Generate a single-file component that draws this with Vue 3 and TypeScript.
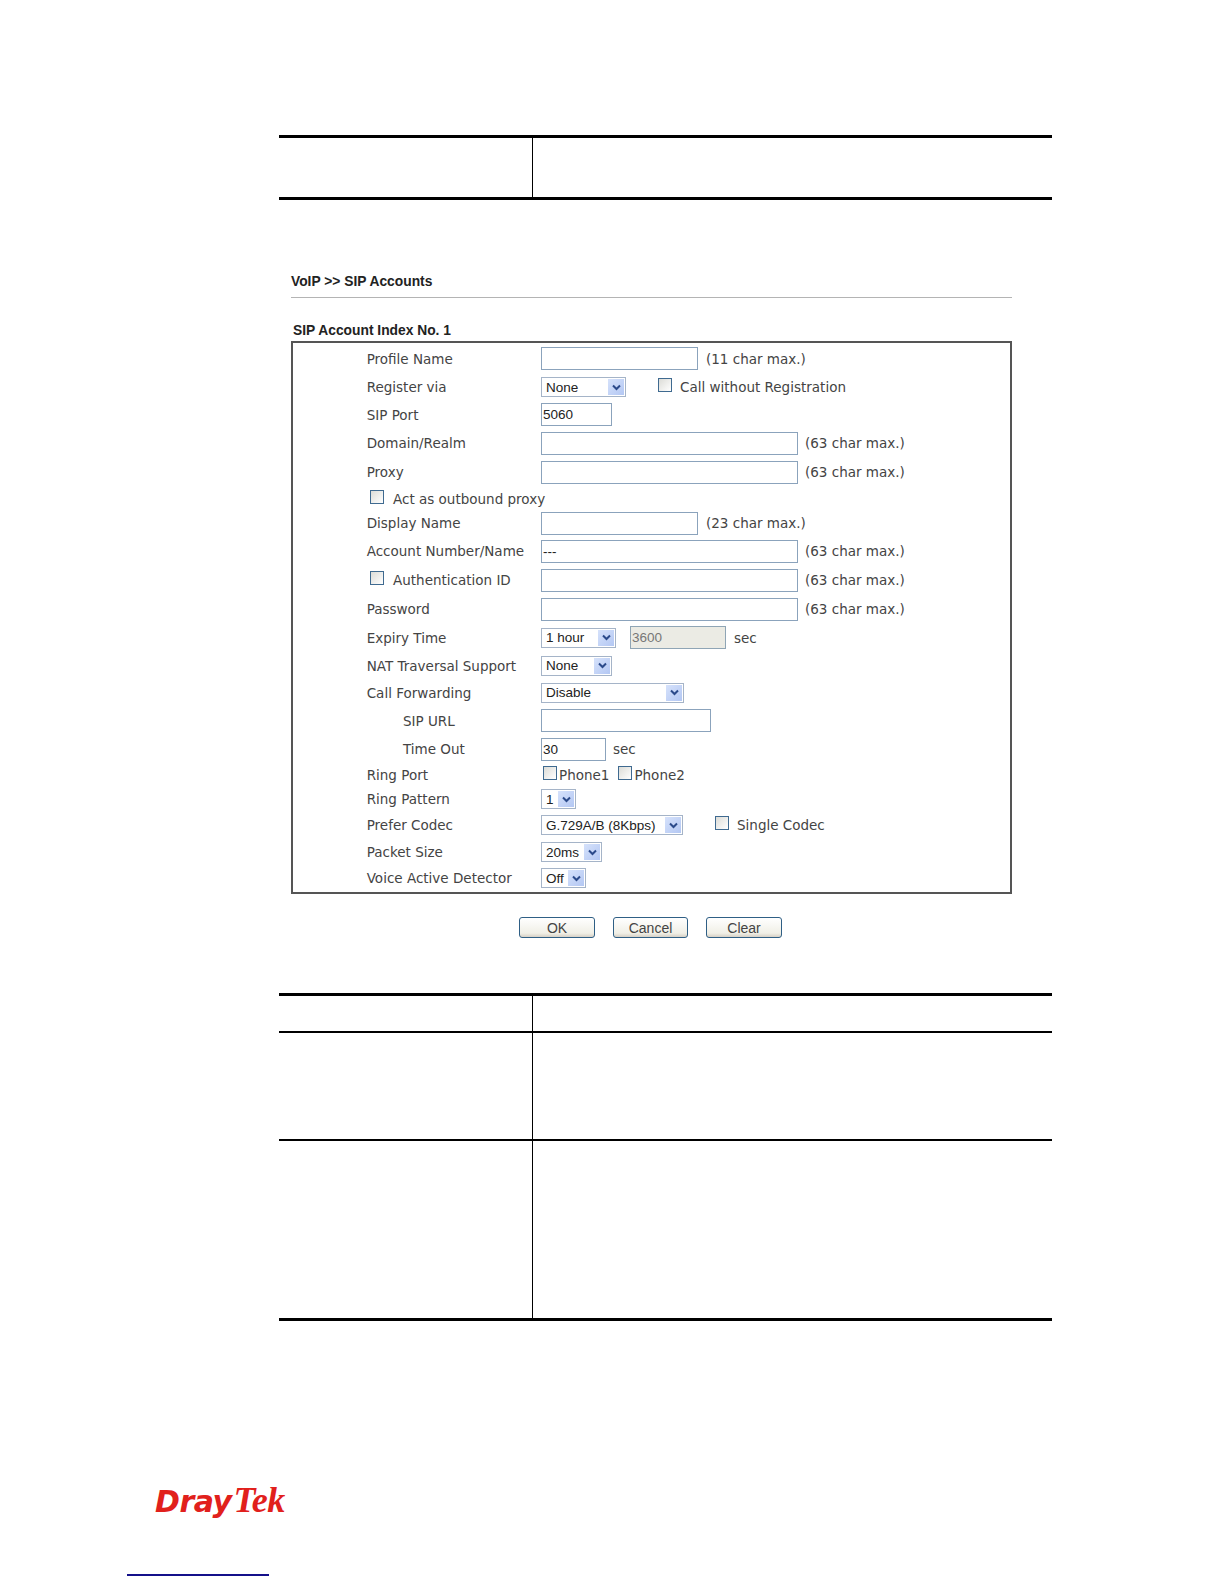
<script setup lang="ts">
const charHint = (n: number) => `(${n} char max.)`
</script>

<template>
  <div class="page">
    <div class="spec top-spec">
      <div class="spec-row r-top"><div class="c1"></div><div class="c2"></div></div>
    </div>

    <div class="shot">
      <div class="crumb">VoIP &gt;&gt; SIP Accounts</div>
      <div class="legend">SIP Account Index No. 1</div>
      <div class="box">
        <div class="form">
          <div class="lab">Profile Name</div>
          <div class="ctl"><input class="inp w157" /><span class="hint">{{ charHint(11) }}</span></div>

          <div class="lab">Register via</div>
          <div class="ctl">
            <div class="sel w85"><span class="sv">None</span><span class="arrow"><svg viewBox="0 0 9 7" width="9" height="7"><path d="M1 1.5 4.5 5 8 1.5" /></svg></span></div>
            <input type="checkbox" class="chk ml32" /><span class="t ml8">Call without Registration</span>
          </div>

          <div class="lab">SIP Port</div>
          <div class="ctl"><input class="inp w71" value="5060" /></div>

          <div class="lab">Domain/Realm</div>
          <div class="ctl"><input class="inp w257" /><span class="hint">{{ charHint(63) }}</span></div>

          <div class="lab">Proxy</div>
          <div class="ctl"><input class="inp w257" /><span class="hint">{{ charHint(63) }}</span></div>

          <div class="lab full"><input type="checkbox" class="chk" /><span class="t ml9">Act as outbound proxy</span></div>

          <div class="lab">Display Name</div>
          <div class="ctl"><input class="inp w157" /><span class="hint">{{ charHint(23) }}</span></div>

          <div class="lab">Account Number/Name</div>
          <div class="ctl"><input class="inp w257" value="---" /><span class="hint">{{ charHint(63) }}</span></div>

          <div class="lab chk-lab"><input type="checkbox" class="chk" /><span class="t ml9">Authentication ID</span></div>
          <div class="ctl"><input class="inp w257" /><span class="hint">{{ charHint(63) }}</span></div>

          <div class="lab">Password</div>
          <div class="ctl"><input class="inp w257" /><span class="hint">{{ charHint(63) }}</span></div>

          <div class="lab">Expiry Time</div>
          <div class="ctl">
            <div class="sel w75"><span class="sv">1 hour</span><span class="arrow"><svg viewBox="0 0 9 7" width="9" height="7"><path d="M1 1.5 4.5 5 8 1.5" /></svg></span></div>
            <input class="inp w96 dis ml14" value="3600" disabled /><span class="t ml8">sec</span>
          </div>

          <div class="lab">NAT Traversal Support</div>
          <div class="ctl"><div class="sel w71"><span class="sv">None</span><span class="arrow"><svg viewBox="0 0 9 7" width="9" height="7"><path d="M1 1.5 4.5 5 8 1.5" /></svg></span></div></div>

          <div class="lab">Call Forwarding</div>
          <div class="ctl"><div class="sel w143"><span class="sv">Disable</span><span class="arrow"><svg viewBox="0 0 9 7" width="9" height="7"><path d="M1 1.5 4.5 5 8 1.5" /></svg></span></div></div>

          <div class="lab ind">SIP URL</div>
          <div class="ctl"><input class="inp w170" /></div>

          <div class="lab ind">Time Out</div>
          <div class="ctl"><input class="inp w65" value="30" /><span class="t ml7">sec</span></div>

          <div class="lab">Ring Port</div>
          <div class="ctl">
            <input type="checkbox" class="chk ml2" /><span class="t ml2">Phone1</span>
            <input type="checkbox" class="chk ml9" /><span class="t ml2">Phone2</span>
          </div>

          <div class="lab">Ring Pattern</div>
          <div class="ctl"><div class="sel w35"><span class="sv">1</span><span class="arrow"><svg viewBox="0 0 9 7" width="9" height="7"><path d="M1 1.5 4.5 5 8 1.5" /></svg></span></div></div>

          <div class="lab">Prefer Codec</div>
          <div class="ctl">
            <div class="sel w142"><span class="sv">G.729A/B (8Kbps)</span><span class="arrow"><svg viewBox="0 0 9 7" width="9" height="7"><path d="M1 1.5 4.5 5 8 1.5" /></svg></span></div>
            <input type="checkbox" class="chk ml32" /><span class="t ml8">Single Codec</span>
          </div>

          <div class="lab">Packet Size</div>
          <div class="ctl"><div class="sel w61"><span class="sv">20ms</span><span class="arrow"><svg viewBox="0 0 9 7" width="9" height="7"><path d="M1 1.5 4.5 5 8 1.5" /></svg></span></div></div>

          <div class="lab">Voice Active Detector</div>
          <div class="ctl"><div class="sel w45"><span class="sv">Off</span><span class="arrow"><svg viewBox="0 0 9 7" width="9" height="7"><path d="M1 1.5 4.5 5 8 1.5" /></svg></span></div></div>
        </div>
      </div>
      <div class="btns">
        <button class="btn">OK</button>
        <button class="btn">Cancel</button>
        <button class="btn">Clear</button>
      </div>
    </div>

    <div class="spec bottom-spec">
      <div class="spec-row r-a"><div class="c1"></div><div class="c2"></div></div>
      <div class="spec-row r-b"><div class="c1"></div><div class="c2"></div></div>
      <div class="spec-row r-c"><div class="c1"></div><div class="c2"></div></div>
    </div>

    <div class="logo"><span class="dray">Dray</span><span class="tek">Tek</span></div>
    <div class="foot-line"></div>
  </div>
</template>

<style scoped>
.page {
  width: 1224px;
  height: 1584px;
  overflow: hidden;
  background: #fff;
  padding-top: 135px;
  box-sizing: border-box;
  font-family: "DejaVu Sans", sans-serif;
  color: #333;
}
.spec {
  margin-left: 279px;
  width: 773px;
  border-top: 3px solid #000;
  border-bottom: 3px solid #000;
  box-sizing: border-box;
}
.top-spec { height: 65px; }
.spec-row { display: flex; }
.c1 { width: 253px; border-right: 1px solid #000; flex: none; }
.c2 { flex: 1; }
.r-top { height: 59px; }
.shot { margin-left: 291px; width: 721px; padding-top: 72px; }
.crumb {
  font: bold 13.8px/20px "Liberation Sans", sans-serif;
  color: #222;
  height: 25px;
  border-bottom: 1px solid #b4b4b4;
}
.legend {
  font: bold 13.8px/20px "Liberation Sans", sans-serif;
  color: #222;
  margin-top: 23px;
  padding-left: 2px;
  height: 20px;
}
.box {
  border: 2px solid #555;
  height: 553px;
  box-sizing: border-box;
}
.form {
  display: grid;
  padding-top: 1px;
  grid-template-columns: 248px 1fr;
  grid-template-rows: 29.3px 27.7px 27.7px 28.8px 29.8px 23.3px 25.7px 29.8px 28.8px 28.8px 28.3px 27.3px 27.2px 28.3px 28.7px 23px 25.6px 26.8px 26.7px 25.9px;
}
.lab, .ctl { display: flex; align-items: center; font-size: 13.5px; white-space: nowrap; }
.lab { padding-left: 73.7px; color: #444; }
.lab.ind { padding-left: 110px; }
.lab.full { grid-column: 1 / 3; padding-left: 77px; }
.lab.chk-lab { padding-left: 77px; }
.t { color: #444; }
.hint { margin-left: 8px; color: #444; }
.w257 + .hint { margin-left: 7px; }
.inp {
  height: 23px;
  box-sizing: border-box;
  border: 1px solid #8ba3bc;
  padding: 0 1px;
  font: 13.5px "Liberation Sans", sans-serif;
  color: #222;
  background: #fff;
  outline: none;
}
.inp.dis { background: #ebebe4; color: #777; border-color: #8fa5b5; }
.w65 { width: 65px; } .w71 { width: 71px; } .w96 { width: 96px; }
.w157 { width: 157px; } .w170 { width: 170px; } .w257 { width: 257px; }
.sel {
  height: 20px;
  box-sizing: border-box;
  border: 1px solid #a5b4c8;
  display: flex;
  align-items: center;
  justify-content: space-between;
  padding: 1px;
  font: 13.5px "Liberation Sans", sans-serif;
  color: #222;
  background: #fff;
}
.sel.w85 { width: 85px; } .sel.w75 { width: 75px; } .sel.w71 { width: 71px; }
.sel.w143 { width: 143px; } .sel.w35 { width: 35px; } .sel.w142 { width: 142px; }
.sel.w61 { width: 61px; } .sel.w45 { width: 45px; }
.sv { padding-left: 3px; }
.arrow {
  width: 16px;
  height: 16px;
  flex: none;
  background: linear-gradient(135deg, #d6e2fb, #b3c7f3);
  display: flex;
  align-items: center;
  justify-content: center;
}
.arrow svg { fill: none; stroke: #2b4a8a; stroke-width: 2; }
.chk {
  appearance: none;
  width: 14px;
  height: 14px;
  margin: 0;
  box-sizing: border-box;
  border: 1px solid #3f6a90;
  background: linear-gradient(135deg, #dcdcd7, #fff);
  flex: none;
  position: relative;
  top: -2px;
}
.ml2 { margin-left: 2px; } .ml7 { margin-left: 7px; } .ml8 { margin-left: 8px; }
.ml9 { margin-left: 9px; } .ml14 { margin-left: 14px; } .ml32 { margin-left: 32px; }
.btns {
  display: flex;
  margin-top: 23px;
  padding-left: 228px;
  gap: 18px;
}
.btn {
  width: 76px;
  height: 21px;
  padding: 0;
  box-sizing: border-box;
  border: 1px solid #2f5f85;
  border-radius: 3px;
  background: linear-gradient(#fff, #f0efe6 80%, #d6d0c5);
  font: 14px "Liberation Sans", sans-serif;
  color: #444;
}
.btn:nth-child(2) { width: 75px; }
.bottom-spec { margin-top: 55px; height: 328px; }
.r-a { height: 37px; border-bottom: 2px solid #000; box-sizing: border-box; }
.r-b { height: 108px; border-bottom: 2px solid #000; box-sizing: border-box; }
.r-c { height: 177px; }
.logo {
  margin: 161px 0 0 155px;
  height: 36px;
  line-height: 36px;
  color: #e1201c;
  white-space: nowrap;
}
.dray { font: italic 700 30px/36px "DejaVu Sans", sans-serif; letter-spacing: -0.5px; }
.tek { font: italic 700 36px/36px "Liberation Serif", serif; margin-left: 2px; letter-spacing: -0.5px; }
.foot-line { margin: 56px 0 0 127px; width: 142px; height: 2px; background: #14108a; }
</style>
